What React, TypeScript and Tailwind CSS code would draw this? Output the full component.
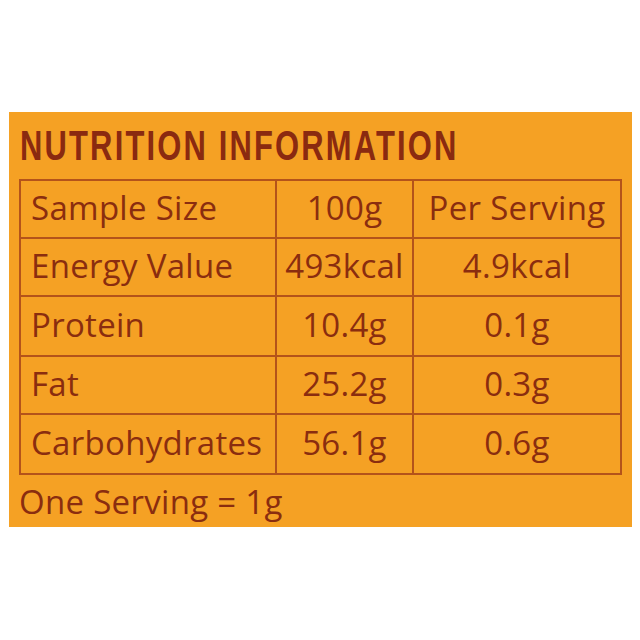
const rows = [
  { label: "Sample Size", total: "100g", serving: "Per Serving" },
  { label: "Energy Value", total: "493kcal", serving: "4.9kcal" },
  { label: "Protein", total: "10.4g", serving: "0.1g" },
  { label: "Fat", total: "25.2g", serving: "0.3g" },
  { label: "Carbohydrates", total: "56.1g", serving: "0.6g" },
];

const App = () => {
  return (
    <div className="h-[640px] w-[640px] bg-white pt-[112px] pl-[9px]">
      <div className="h-[415px] w-[623px] bg-[#f5a124] pt-[12px] pl-[11px] text-[#8a2d0f]">
        <h1 className="h-[43px] origin-left scale-x-[0.72] whitespace-nowrap font-['Liberation_Sans',sans-serif] text-[43px] font-bold leading-none tracking-[3px] text-[#8a2a10]">
          NUTRITION INFORMATION
        </h1>

        <div className="mt-[12px] -ml-px w-[603px] border-2 border-[#b4531a] font-['Open_Sans',sans-serif] text-[33px] font-medium leading-none tracking-[0.3px]">
          {rows.map((row, i) => (
            <div
              key={row.label}
              className={`grid grid-cols-[256px_137px_206px] ${
                i < rows.length - 1 ? "border-b-2 border-[#b4531a]" : ""
              } ${i === 2 ? "h-[60px]" : "h-[58px]"}`}
            >
              <div className="flex items-center border-r-2 border-[#b4531a] pb-1 pl-[10px]">
                {row.label}
              </div>
              <div className="flex items-center justify-center border-r-2 border-[#b4531a] pb-1">
                {row.total}
              </div>
              <div className="flex items-center justify-center pb-1">
                {row.serving}
              </div>
            </div>
          ))}
        </div>

        <p className="mt-[10px] -ml-px font-['Open_Sans',sans-serif] text-[33px] font-medium leading-none tracking-[0.3px]">
          One Serving = 1g
        </p>
      </div>
    </div>
  );
};

export default App;
